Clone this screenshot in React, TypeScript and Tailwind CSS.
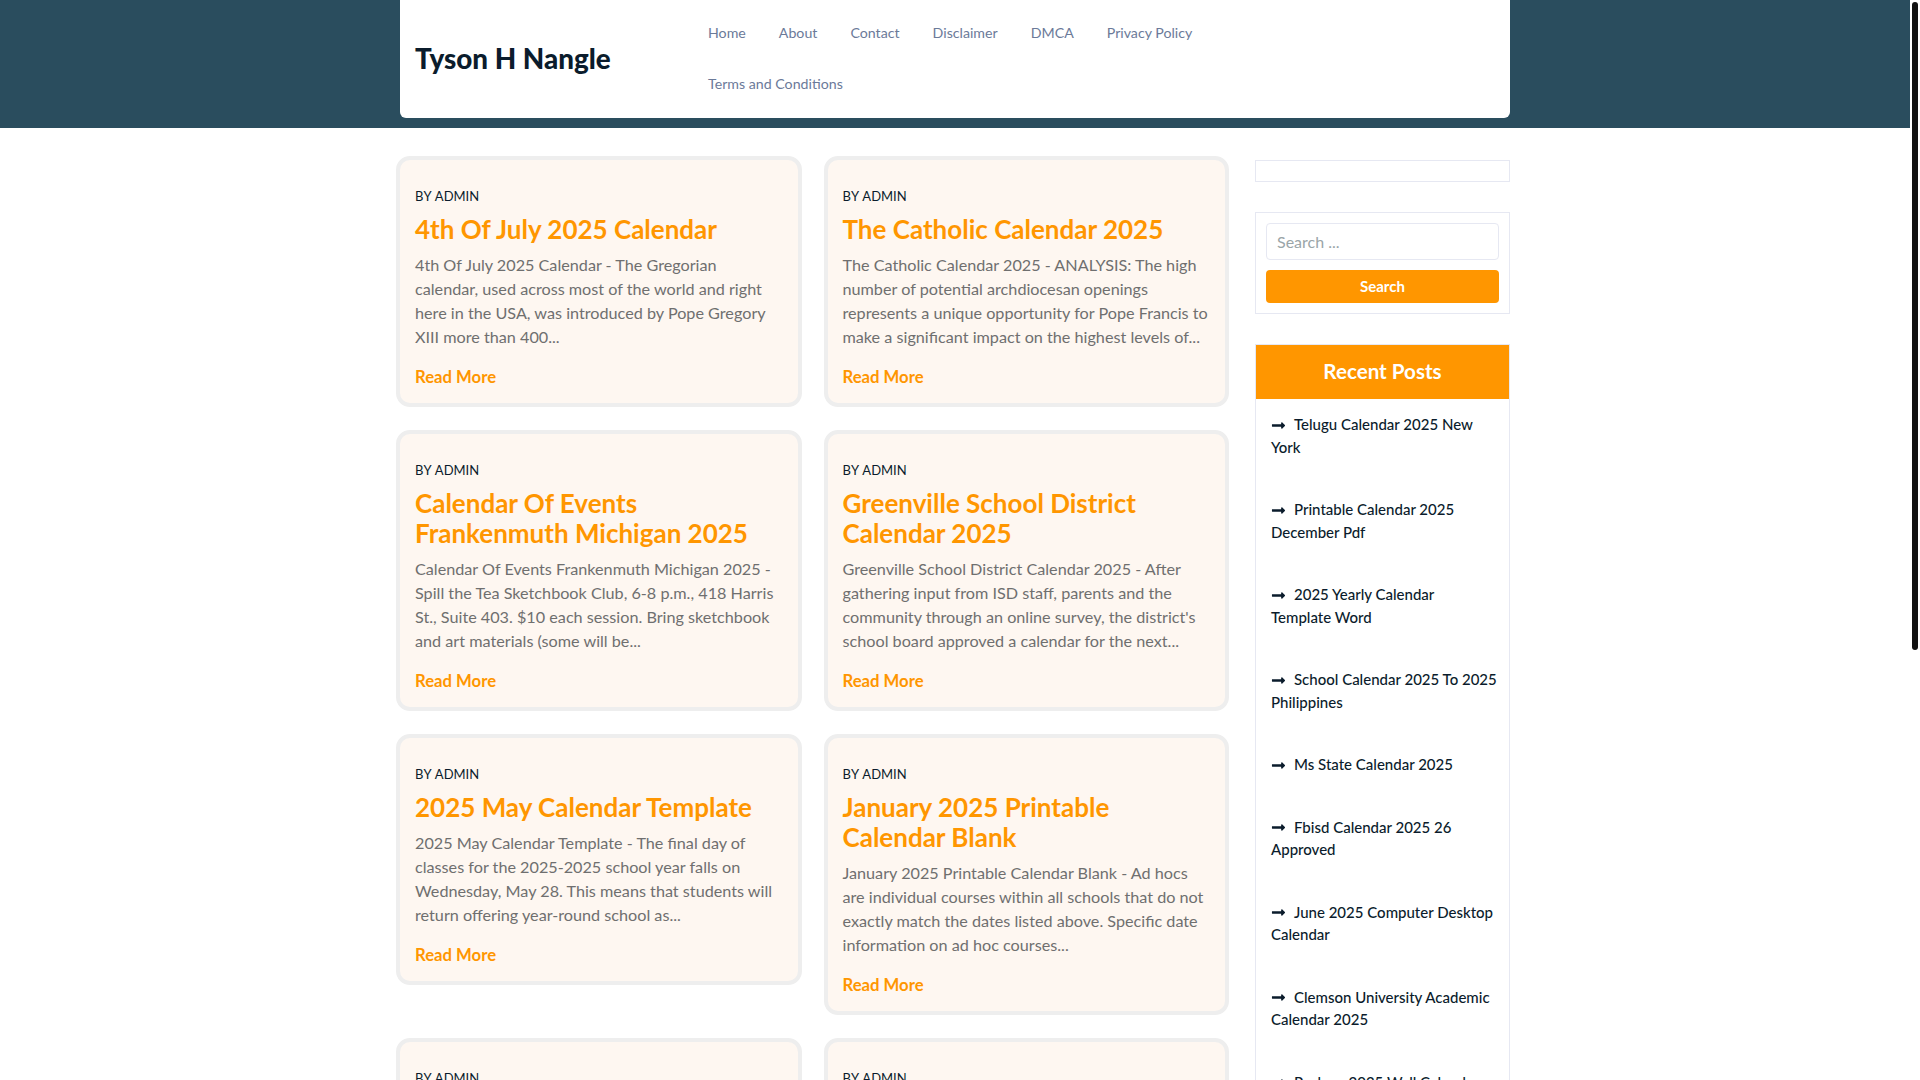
import { FaLongArrowAltRight } from 'react-icons/fa'

const NAV_ITEMS = ['Home', 'About', 'Contact', 'Disclaimer', 'DMCA', 'Privacy Policy', 'Terms and Conditions']

const POSTS = [
  {
    title: '4th Of July 2025 Calendar',
    lines: ['4th Of July 2025 Calendar - The Gregorian', 'calendar, used across most of the world and right', 'here in the USA, was introduced by Pope Gregory', 'XIII more than 400...'],
  },
  {
    title: 'The Catholic Calendar 2025',
    lines: ['The Catholic Calendar 2025 - ANALYSIS: The high', 'number of potential archdiocesan openings', 'represents a unique opportunity for Pope Francis to', 'make a significant impact on the highest levels of...'],
  },
  {
    title: 'Calendar Of Events Frankenmuth Michigan 2025',
    lines: ['Calendar Of Events Frankenmuth Michigan 2025 -', 'Spill the Tea Sketchbook Club, 6-8 p.m., 418 Harris', 'St., Suite 403. $10 each session. Bring sketchbook', 'and art materials (some will be...'],
  },
  {
    title: 'Greenville School District Calendar 2025',
    lines: ['Greenville School District Calendar 2025 - After', 'gathering input from ISD staff, parents and the', "community through an online survey, the district's", 'school board approved a calendar for the next...'],
  },
  {
    title: '2025 May Calendar Template',
    lines: ['2025 May Calendar Template - The final day of', 'classes for the 2025-2025 school year falls on', 'Wednesday, May 28. This means that students will', 'return offering year-round school as...'],
  },
  {
    title: 'January 2025 Printable Calendar Blank',
    lines: ['January 2025 Printable Calendar Blank - Ad hocs', 'are individual courses within all schools that do not', 'exactly match the dates listed above. Specific date', 'information on ad hoc courses...'],
  },
]

const RECENT = [
  'Telugu Calendar 2025 New York',
  'Printable Calendar 2025 December Pdf',
  '2025 Yearly Calendar Template Word',
  'School Calendar 2025 To 2025 Philippines',
  'Ms State Calendar 2025',
  'Fbisd Calendar 2025 26 Approved',
  'June 2025 Computer Desktop Calendar',
  'Clemson University Academic Calendar 2025',
  'Packers 2025 Wall Calendar',
]

function PostCard({ title, lines }: { title?: string; lines?: string[] }) {
  return (
    <article className="rounded-[14px] border-4 border-[#eeeeee] bg-[#fef7f1] px-[15px] pt-[24px] pb-[14px]">
      <p className="text-[13px] leading-[24px] text-[#0b1c2c] [font-kerning:none]">BY ADMIN</p>
      {title && (
        <>
          <h2 className="mt-[6px] text-[26px] leading-[30px] font-bold text-[#ff9600]">{title}</h2>
          <p className="mt-[9px] text-[16.2px] leading-[24px] text-[#6f6f6f]">
            {lines?.map(line => <span key={line} className="block whitespace-nowrap">{line}</span>)}
          </p>
          <p className="mt-[16px] text-[16.7px] leading-[24px] font-bold text-[#ff9600]">Read More</p>
        </>
      )}
    </article>
  )
}

export default function App() {
  return (
    <div className="flex h-screen overflow-hidden bg-white font-['Lato','Liberation_Sans',sans-serif]">
      <div className="min-w-0 flex-1">
        {/* Header */}
        <header className="h-[128px] bg-[#2a4d5e]">
          <div className="mx-auto flex h-[118px] w-[1110px] items-center rounded-b-[6px] bg-white pb-[3px] pl-[15px]">
            <div className="mt-[2px] w-[293px] text-[27.8px] font-black text-[#0b1c2c]">Tyson H Nangle</div>
            <nav className="flex w-[560px] flex-wrap gap-x-[33px] text-[14.2px] leading-[51px] text-[#6b7a99]">
              {NAV_ITEMS.map(item => <a key={item}>{item}</a>)}
            </nav>
          </div>
        </header>

        {/* Content */}
        <div className="mx-auto mt-[28px] flex w-[1118px] items-start gap-[26px]">
          <main className="grid w-[833px] grid-cols-2 items-start gap-x-[22px] gap-y-[23px]">
            {POSTS.map(post => <PostCard key={post.title} {...post} />)}
            <PostCard />
            <PostCard />
          </main>

          <aside className="w-[255px] pt-[4px]">
            <div className="h-[22px] border border-[#e6e8f2]" />
            <div className="mt-[30px] flex flex-col gap-[10px] border border-[#e6e8f2] p-[10px]">
              <input
                readOnly
                placeholder="Search ..."
                className="h-[37px] rounded-[4px] border border-[#e6e8f2] px-[10px] pb-[1px] text-[16px] outline-none placeholder:text-[#9aa5a8]"
              />
              <button className="h-[33px] rounded-[4px] bg-[#ff9600] pb-[1px] text-[15px] font-bold text-white">Search</button>
            </div>
            <div className="mt-[30px] border-x border-t border-[#e6e8f2]">
              <h3 className="h-[54px] bg-[#ff9600] text-center text-[20.6px] leading-[53px] font-bold text-white">Recent Posts</h3>
              <ul className="flex flex-col gap-[40px] pt-[14px] pr-[12px] pl-[15px] text-[15px] leading-[22.5px] font-medium text-[#0b1c2c]">
                {RECENT.map(item => (
                  <li key={item}>
                    <FaLongArrowAltRight className="mr-[8px] inline-block h-[15px] w-[15px] -translate-y-[1px]" />
                    {item}
                  </li>
                ))}
              </ul>
            </div>
          </aside>
        </div>
      </div>

      {/* Scrollbar */}
      <div className="w-[10px] shrink-0 bg-white px-[2px] pt-[2px]">
        <div className="h-[648px] rounded-[3px] bg-[#111111]" />
      </div>
    </div>
  )
}
